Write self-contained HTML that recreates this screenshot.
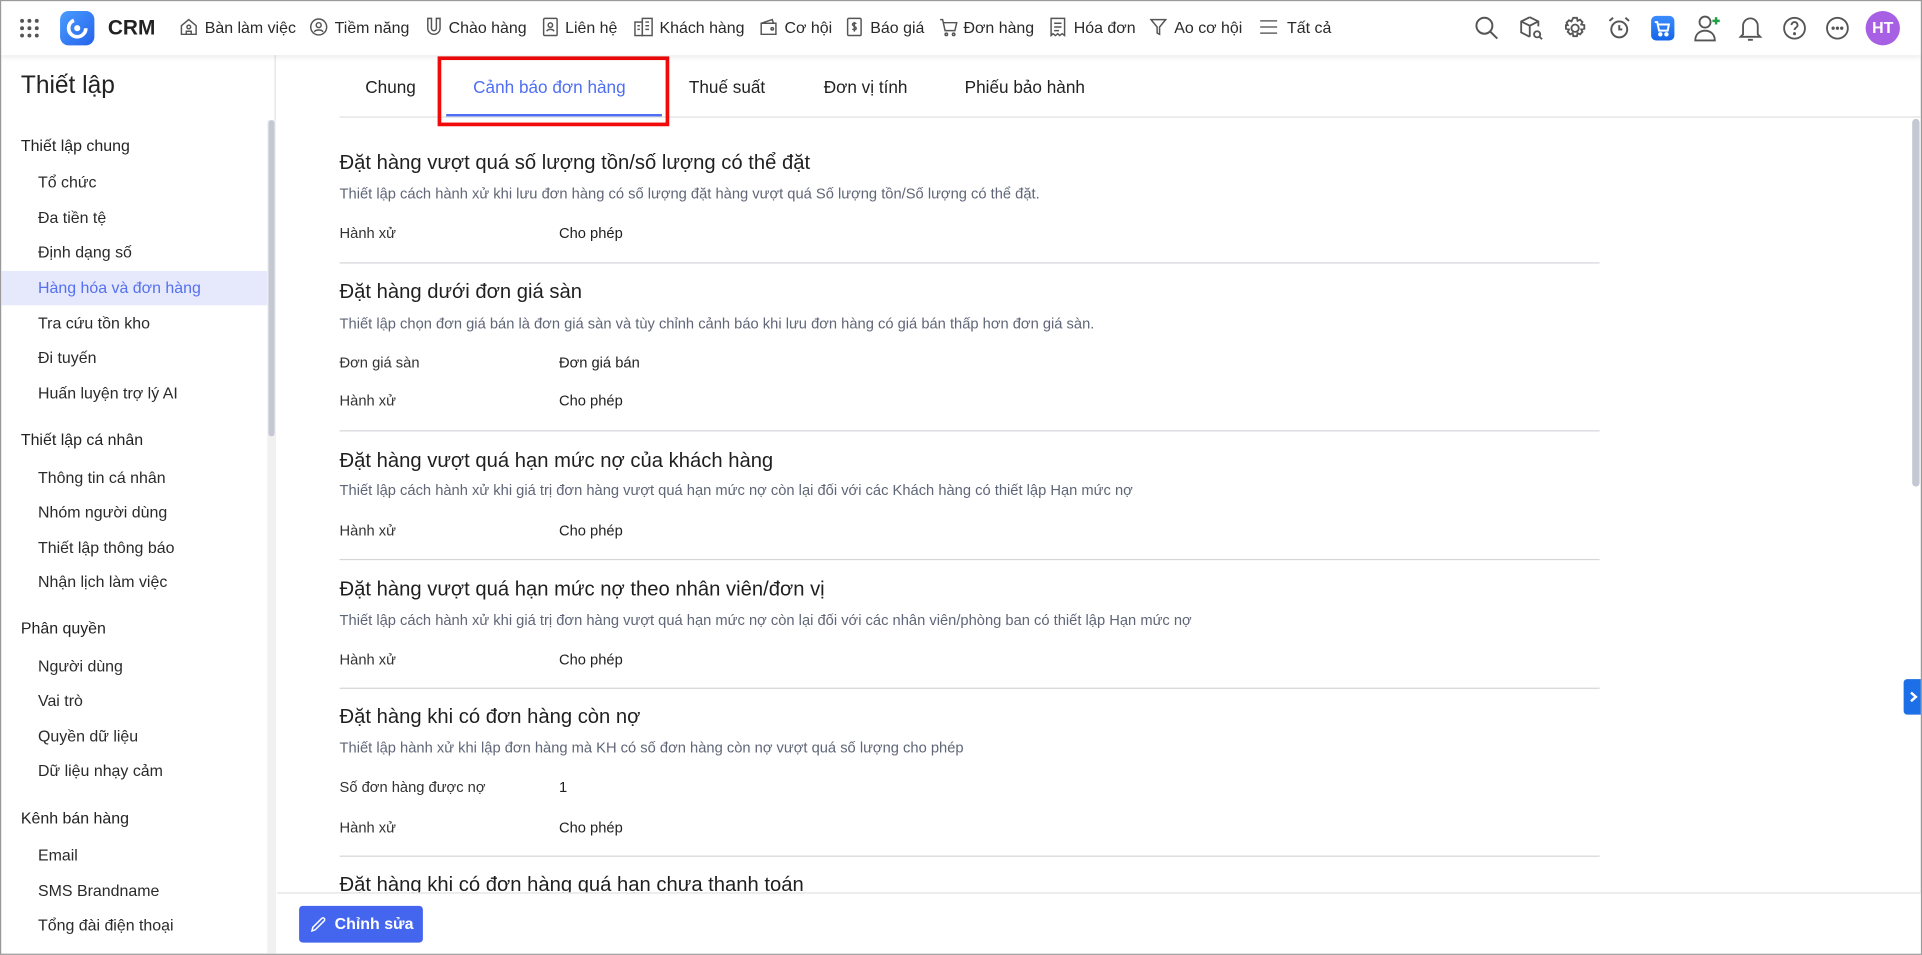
<!DOCTYPE html>
<html><head><meta charset="utf-8"><style>
*{box-sizing:border-box;margin:0;padding:0}
html,body{width:1922px;height:955px;overflow:hidden;background:#fff}
#w{position:absolute;left:0;top:0;width:1568px;height:779px;transform:scale(1.22577);transform-origin:0 0;font-family:"Liberation Sans",sans-serif;color:#222;border:1px solid #9a9a9a;overflow:hidden;background:#fff}
.a{position:absolute;white-space:nowrap}
.top{position:absolute;left:0;top:0;width:1566px;height:44px;background:#fff;box-shadow:0 2px 4px rgba(0,0,0,.08);z-index:2}
.nav{font-size:13px;color:#2a2a2a;top:14px}
.side{position:absolute;left:0;top:44px;width:224px;height:735px;border-right:1px solid #e2e2e2}
.sh{font-size:13px;color:#222;left:16px;font-weight:500}
.si{font-size:13px;color:#2a2a2a;left:30px}
.t{font-size:13px;top:62px;color:#222}
.h{font-size:16.5px;left:276px;color:#1f1f1f}
.d{font-size:12px;left:276px;color:#5f6677}
.l{font-size:12px;left:276px;color:#333}
.v{font-size:12px;left:455px;color:#222}
.hr{position:absolute;left:276px;width:1028px;height:1px;background:#d4d6da}
</style></head><body><div id="w">
<div class="top">
<svg class="a" style="left:14px;top:13px" width="18" height="18" viewBox="0 0 18 18" fill="#555"><circle cx="3" cy="3" r="1.6"/><circle cx="9" cy="3" r="1.6"/><circle cx="15" cy="3" r="1.6"/><circle cx="3" cy="9" r="1.6"/><circle cx="9" cy="9" r="1.6"/><circle cx="15" cy="9" r="1.6"/><circle cx="3" cy="15" r="1.6"/><circle cx="9" cy="15" r="1.6"/><circle cx="15" cy="15" r="1.6"/></svg>
<div class="a" style="left:48px;top:8px;width:28px;height:28px;border-radius:7px;background:linear-gradient(135deg,#4a9cff,#2563eb)"><svg width="28" height="28" viewBox="0 0 28 28"><circle cx="14" cy="14" r="7" fill="none" stroke="#fff" stroke-width="3" stroke-dasharray="30 14"/><circle cx="14" cy="14" r="2.5" fill="#fff"/></svg></div>
<div class="a" style="left:87px;top:12px;font-size:17px;font-weight:bold;color:#222">CRM</div>
<svg class="a" style="left:145px;top:13px" width="16" height="16" viewBox="0 0 16 16" fill="none" stroke="#555" stroke-width="1.2"><path d="M2 7L8 2l6 5v7H2z"/><circle cx="8" cy="8" r="1.5"/><path d="M6 14v-2.5h4V14"/></svg>
<div class="a nav" style="left:166px">Bàn làm việc</div>
<svg class="a" style="left:251px;top:13px" width="16" height="16" viewBox="0 0 16 16" fill="none" stroke="#555" stroke-width="1.2"><circle cx="8" cy="8" r="6.5"/><circle cx="8" cy="6.5" r="2"/><path d="M4.5 12c1-2 6-2 7 0"/></svg>
<div class="a nav" style="left:272px">Tiềm năng</div>
<svg class="a" style="left:346px;top:13px" width="14" height="16" viewBox="0 0 14 16" fill="none" stroke="#555" stroke-width="1.2"><path d="M2 1v8a5 5 0 0010 0V1H9v8a2 2 0 01-4 0V1z"/></svg>
<div class="a nav" style="left:365px">Chào hàng</div>
<svg class="a" style="left:441px;top:13px" width="14" height="16" viewBox="0 0 14 16" fill="none" stroke="#555" stroke-width="1.2"><rect x="1.5" y="1" width="11" height="14" rx="1"/><circle cx="7" cy="6.5" r="1.8"/><path d="M4 11.5c1-2 5-2 6 0"/></svg>
<div class="a nav" style="left:460px">Liên hệ</div>
<svg class="a" style="left:516px;top:13px" width="16" height="16" viewBox="0 0 16 16" fill="none" stroke="#555" stroke-width="1.2"><rect x="1" y="4" width="6" height="11"/><rect x="7" y="1" width="8" height="14"/><path d="M9.5 4h3M9.5 7h3M9.5 10h3M3 7h2M3 10h2"/></svg>
<div class="a nav" style="left:537px">Khách hàng</div>
<svg class="a" style="left:618px;top:13px" width="16" height="16" viewBox="0 0 16 16" fill="none" stroke="#555" stroke-width="1.2"><path d="M2 5h12v9H2z"/><path d="M2 5l9-3 1 3"/><circle cx="11" cy="9.5" r="1"/></svg>
<div class="a nav" style="left:639px">Cơ hội</div>
<svg class="a" style="left:689px;top:13px" width="14" height="16" viewBox="0 0 14 16" fill="none" stroke="#555" stroke-width="1.2"><rect x="1.5" y="1" width="11" height="14" rx="1"/><path d="M8.5 5.5C8 4.5 5.5 4.5 5.5 6S8.5 7.5 8.5 9 6 10.5 5.5 9.5M7 3.8v8"/></svg>
<div class="a nav" style="left:709px">Báo giá</div>
<svg class="a" style="left:765px;top:13px" width="16" height="16" viewBox="0 0 16 16" fill="none" stroke="#555" stroke-width="1.2"><path d="M1 2h2l2 9h8l1.5-6.5H4"/><circle cx="6" cy="14" r="1"/><circle cx="12" cy="14" r="1"/></svg>
<div class="a nav" style="left:785px">Đơn hàng</div>
<svg class="a" style="left:855px;top:13px" width="14" height="16" viewBox="0 0 14 16" fill="none" stroke="#555" stroke-width="1.2"><path d="M1.5 1h11v14l-2-1.5-2 1.5-1.5-1.5L5 15l-2-1.5-1.5 1.5z"/><path d="M4 5h6M4 8h6M4 11h4"/></svg>
<div class="a nav" style="left:875px">Hóa đơn</div>
<svg class="a" style="left:937px;top:13px" width="14" height="16" viewBox="0 0 14 16" fill="none" stroke="#555" stroke-width="1.2"><path d="M1 2h12L8 8v6l-2-1V8z"/></svg>
<div class="a nav" style="left:957px">Ao cơ hội</div>
<svg class="a" style="left:1027px;top:14px" width="14" height="14" viewBox="0 0 14 14" stroke="#666" stroke-width="1.2"><path d="M0 2h14M0 7h14M0 12h14"/></svg>
<div class="a nav" style="left:1049px">Tất cả</div>
<svg class="a" style="left:1202px;top:12px" width="20" height="20" viewBox="0 0 20 20" fill="none" stroke="#555" stroke-width="1.6"><circle cx="8" cy="8" r="6.5"/><path d="M13 13l5.5 5.5"/></svg>
<svg class="a" style="left:1238px;top:12px" width="20" height="20" viewBox="0 0 20 20" fill="none" stroke="#555" stroke-width="1.5"><path d="M9 1L2 4.5v9L9 17M9 1l7 3.5v4M2 4.5L9 8l7-3.5M9 8v9"/><circle cx="15" cy="15" r="2.5"/><path d="M17 17l2 2"/></svg>
<svg class="a" style="left:1274px;top:12px" width="20" height="20" viewBox="0 0 20 20" fill="none" stroke="#555" stroke-width="1.5"><path d="M8.5 1.5h3l.5 2.5 2-1 2 2-1 2 2.5.5v3l-2.5.5 1 2-2 2-2-1-.5 2.5h-3l-.5-2.5-2 1-2-2 1-2-2.5-.5v-3L4 7.5l-1-2 2-2 2 1z"/><circle cx="10" cy="10" r="3"/></svg>
<svg class="a" style="left:1310px;top:12px" width="20" height="20" viewBox="0 0 20 20" fill="none" stroke="#555" stroke-width="1.6"><circle cx="10" cy="11" r="6.5"/><path d="M10 7.5V11h2.5M2 4l3-2.5M18 4l-3-2.5"/></svg>
<div class="a" style="left:1346px;top:12px;width:19px;height:20px;border-radius:4px;background:linear-gradient(#3b8cff,#1565e8)"><svg width="19" height="20" viewBox="0 0 19 20" fill="none" stroke="#fff" stroke-width="1.6"><path d="M3 5h2l1.5 7h7l1-5H6"/><circle cx="7.5" cy="15" r="1" fill="#fff"/><circle cx="12.5" cy="15" r="1" fill="#fff"/></svg></div>
<svg class="a" style="left:1380px;top:10px" width="24" height="24" viewBox="0 0 24 24" fill="none" stroke="#555" stroke-width="1.5"><circle cx="10" cy="7" r="4.5"/><path d="M2 22c0-5 3.5-8 8-8s8 3 8 8z"/><path d="M19 3v6M16 6h6" stroke="#22a046" stroke-width="2"/></svg>
<svg class="a" style="left:1417px;top:11px" width="20" height="22" viewBox="0 0 20 22" fill="none" stroke="#555" stroke-width="1.5"><path d="M4 16V9a6 6 0 0112 0v7l2 2H2z"/><path d="M8 20.5h4"/></svg>
<svg class="a" style="left:1453px;top:12px" width="20" height="20" viewBox="0 0 20 20" fill="none" stroke="#555" stroke-width="1.5"><circle cx="10" cy="10" r="8.5"/><path d="M7.5 7.5a2.5 2.5 0 115 0c0 2-2.5 2-2.5 4"/><circle cx="10" cy="14.5" r=".5" fill="#555"/></svg>
<svg class="a" style="left:1488px;top:12px" width="20" height="20" viewBox="0 0 20 20" fill="none" stroke="#555" stroke-width="1.5"><circle cx="10" cy="10" r="8.5"/><circle cx="6.5" cy="10" r=".6" fill="#555"/><circle cx="10" cy="10" r=".6" fill="#555"/><circle cx="13.5" cy="10" r=".6" fill="#555"/></svg>
<div class="a" style="left:1521px;top:8px;width:28px;height:28px;border-radius:50%;background:#a760e3;color:#fff;font-size:13px;font-weight:bold;text-align:center;line-height:28px">HT</div>
</div>

<div class="side">
<div class="a" style="left:16px;top:14px;font-size:20px;color:#222">Thiết lập</div>
<div class="a" style="left:217px;top:53px;width:7px;height:682px;background:#f1f1f1"></div>
<div class="a" style="left:218px;top:53px;width:5px;height:258px;background:#c4c8d3;border-radius:3px"></div>
<div class="a" style="left:0;top:176px;width:217px;height:28px;background:#e6e9fb"></div>
<div class="a sh" style="top:66px">Thiết lập chung</div>
<div class="a si" style="top:96px">Tổ chức</div>
<div class="a si" style="top:125px">Đa tiền tệ</div>
<div class="a si" style="top:153px">Định dạng số</div>
<div class="a si" style="top:182px;color:#5470ef">Hàng hóa và đơn hàng</div>
<div class="a si" style="top:211px">Tra cứu tồn kho</div>
<div class="a si" style="top:239px">Đi tuyến</div>
<div class="a si" style="top:268px">Huấn luyện trợ lý AI</div>
<div class="a sh" style="top:306px">Thiết lập cá nhân</div>
<div class="a si" style="top:337px">Thông tin cá nhân</div>
<div class="a si" style="top:365px">Nhóm người dùng</div>
<div class="a si" style="top:394px">Thiết lập thông báo</div>
<div class="a si" style="top:422px">Nhận lịch làm việc</div>
<div class="a sh" style="top:460px">Phân quyền</div>
<div class="a si" style="top:491px">Người dùng</div>
<div class="a si" style="top:519px">Vai trò</div>
<div class="a si" style="top:548px">Quyền dữ liệu</div>
<div class="a si" style="top:576px">Dữ liệu nhạy cảm</div>
<div class="a sh" style="top:615px">Kênh bán hàng</div>
<div class="a si" style="top:645px">Email</div>
<div class="a si" style="top:674px">SMS Brandname</div>
<div class="a si" style="top:702px">Tổng đài điện thoại</div>
</div>

<div class="a t" style="left:297px;font-size:14px">Chung</div>
<div class="a t" style="left:385px;font-size:14px;color:#4f6ef2">Cảnh báo đơn hàng</div>
<div class="a t" style="left:561px;font-size:14px">Thuế suất</div>
<div class="a t" style="left:671px;font-size:14px">Đơn vị tính</div>
<div class="a t" style="left:786px;font-size:14px">Phiếu bảo hành</div>
<div class="a" style="left:276px;top:94px;width:1290px;height:1px;background:#e0e0e0"></div>
<div class="a" style="left:363px;top:92px;width:176px;height:2px;background:#4f6ef2"></div>
<div class="a" style="left:356px;top:45px;width:189px;height:57px;border:3px solid #f00a0a"></div>
<div class="a" style="left:1559px;top:96px;width:6px;height:300px;background:#c4c8d3;border-radius:3px"></div>

<div class="a h" style="top:123px">Đặt hàng vượt quá số lượng tồn/số lượng có thể đặt</div>
<div class="a d" style="top:150px">Thiết lập cách hành xử khi lưu đơn hàng có số lượng đặt hàng vượt quá Số lượng tồn/Số lượng có thể đặt.</div>
<div class="a l" style="top:182px">Hành xử</div><div class="a v" style="top:182px">Cho phép</div>
<div class="hr" style="top:213px"></div>

<div class="a h" style="top:228px">Đặt hàng dưới đơn giá sàn</div>
<div class="a d" style="top:256px">Thiết lập chọn đơn giá bán là đơn giá sàn và tùy chỉnh cảnh báo khi lưu đơn hàng có giá bán thấp hơn đơn giá sàn.</div>
<div class="a l" style="top:288px">Đơn giá sàn</div><div class="a v" style="top:288px">Đơn giá bán</div>
<div class="a l" style="top:319px">Hành xử</div><div class="a v" style="top:319px">Cho phép</div>
<div class="hr" style="top:350px"></div>

<div class="a h" style="top:366px">Đặt hàng vượt quá hạn mức nợ của khách hàng</div>
<div class="a d" style="top:392px">Thiết lập cách hành xử khi giá trị đơn hàng vượt quá hạn mức nợ còn lại đối với các Khách hàng có thiết lập Hạn mức nợ</div>
<div class="a l" style="top:425px">Hành xử</div><div class="a v" style="top:425px">Cho phép</div>
<div class="hr" style="top:455px"></div>

<div class="a h" style="top:471px">Đặt hàng vượt quá hạn mức nợ theo nhân viên/đơn vị</div>
<div class="a d" style="top:498px">Thiết lập cách hành xử khi giá trị đơn hàng vượt quá hạn mức nợ còn lại đối với các nhân viên/phòng ban có thiết lập Hạn mức nợ</div>
<div class="a l" style="top:530px">Hành xử</div><div class="a v" style="top:530px">Cho phép</div>
<div class="hr" style="top:560px"></div>

<div class="a h" style="top:575px">Đặt hàng khi có đơn hàng còn nợ</div>
<div class="a d" style="top:602px">Thiết lập hành xử khi lập đơn hàng mà KH có số đơn hàng còn nợ vượt quá số lượng cho phép</div>
<div class="a l" style="top:634px">Số đơn hàng được nợ</div><div class="a v" style="top:634px">1</div>
<div class="a l" style="top:667px">Hành xử</div><div class="a v" style="top:667px">Cho phép</div>
<div class="hr" style="top:697px"></div>
<div class="a h" style="top:712px">Đặt hàng khi có đơn hàng quá hạn chưa thanh toán</div>

<div class="a" style="left:225px;top:727px;width:1342px;height:52px;background:#fff;border-top:1px solid #e0e0e0"></div>
<div class="a" style="left:243px;top:738px;width:101px;height:30px;background:#4466ee;border-radius:3px;color:#fff;font-size:13px;font-weight:bold;line-height:30px;padding-left:29px">Chỉnh sửa</div>
<svg class="a" style="left:252px;top:746px" width="14" height="14" viewBox="0 0 14 14" fill="none" stroke="#fff" stroke-width="1.2"><path d="M1.5 12.5l.7-3L9.5 2.2a1.4 1.4 0 012 2L4.2 11.5z"/></svg>
<div class="a" style="left:1552px;top:553px;width:15px;height:29px;background:#1c6fe6;border-radius:3px 0 0 3px"><svg width="15" height="29" viewBox="0 0 15 29" fill="none" stroke="#fff" stroke-width="2"><path d="M6 11l4 3.5-4 3.5"/></svg></div>
</div></body></html>
